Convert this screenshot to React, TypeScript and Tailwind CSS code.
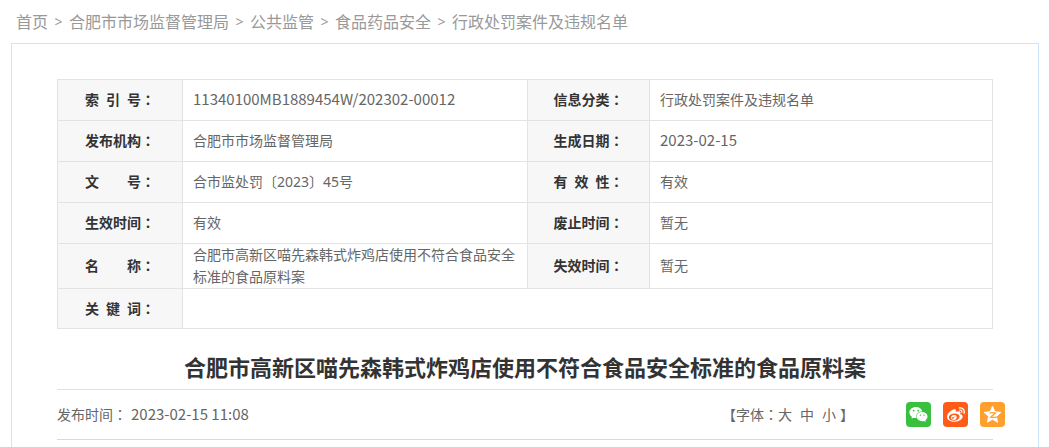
import { FaWeibo, FaWeixin } from "react-icons/fa";

const crumbs = ["首页", "合肥市市场监督管理局", "公共监管", "食品药品安全", "行政处罚案件及违规名单"];

type Field = { label: string; value: string; latin?: boolean };

const rows: [Field, Field][] = [
  [
    { label: "索\u2002引\u2002号", value: "11340100MB1889454W/202302-00012", latin: true },
    { label: "信息分类", value: "行政处罚案件及违规名单" },
  ],
  [
    { label: "发布机构", value: "合肥市市场监督管理局" },
    { label: "生成日期", value: "2023-02-15", latin: true },
  ],
  [
    { label: "文\u3000\u3000号", value: "合市监处罚〔2023〕45号" },
    { label: "有\u2002效\u2002性", value: "有效" },
  ],
  [
    { label: "生效时间", value: "有效" },
    { label: "废止时间", value: "暂无" },
  ],
  [
    { label: "名\u3000\u3000称", value: "合肥市高新区喵先森韩式炸鸡店使用不符合食品安全标准的食品原料案" },
    { label: "失效时间", value: "暂无" },
  ],
];

function Colon() {
  return <span className="font-['Noto_Sans_CJK_TC',sans-serif] leading-none">：</span>;
}

function Label({ children }: { children: string }) {
  return (
    <th scope="row" className="border border-[#e3e3e3] bg-[#f7f7f7] p-0 text-center font-bold text-[#333]">
      {children}
      <Colon />
    </th>
  );
}

function Value({ field }: { field: Field }) {
  return (
    <td className="border border-[#e3e3e3] px-2.5 py-0">
      {field.latin ? (
        <span className="font-['Noto_Sans_CJK_SC',sans-serif] text-[15px] leading-none">{field.value}</span>
      ) : (
        field.value
      )}
    </td>
  );
}

function QzoneIcon() {
  return (
    <svg viewBox="0 0 20 20" className="size-[19px]" aria-hidden="true">
      <path
        d="M10 1.2 12.6 7l6.3.7-4.7 4.3 1.3 6.3L10 15.1l-5.5 3.2L5.8 12 1.1 7.7 7.4 7Z"
        fill="#fff"
        stroke="#fff"
        strokeWidth="0.8"
        strokeLinejoin="round"
      />
      <path d="M6.8 8.5c2.2-.5 4.4-.5 6.4 0L8 12.8c2.2.5 4.4.4 6.6-.1" fill="none" stroke="#ff9f2e" strokeWidth="1.3" />
    </svg>
  );
}

export default function App() {
  return (
    <div className="bg-white font-['Noto_Sans','Noto_Sans_CJK_SC',sans-serif] text-sm leading-[22px] text-[#666]">
      <nav aria-label="面包屑" className="px-4 pt-2.5 pb-[9px] text-base leading-6 text-[#999]">
        <ol className="flex flex-wrap">
          {crumbs.map((name, i) => (
            <li key={name} className="flex">
              {i > 0 && <span className="w-[21px] text-center text-sm leading-6">&gt;</span>}
              <a href="#">{name}</a>
            </li>
          ))}
        </ol>
      </nav>

      <main className="mr-2.5 ml-[11px] border border-b-0 border-[#d0e4f7] px-[45px] pt-[35px] pb-2">
        <table className="w-full table-fixed border-collapse">
          <colgroup>
            <col className="w-[125px]" />
            <col className="w-[36.9%]" />
            <col className="w-[122px]" />
            <col />
          </colgroup>
          <tbody>
            {rows.map(([left, right]) => (
              <tr key={left.label} className="h-[41px]">
                <Label>{left.label}</Label>
                <Value field={left} />
                <Label>{right.label}</Label>
                <Value field={right} />
              </tr>
            ))}
            <tr className="h-10">
              <Label>{"关\u2002键\u2002词"}</Label>
              <td colSpan={3} className="border border-[#e3e3e3]" />
            </tr>
          </tbody>
        </table>

        <h1 className="border-b border-[#d0e4f7] pt-[21px] pb-[7px] text-center font-['Noto_Sans_CJK_SC',sans-serif] text-[22px] leading-8 font-bold text-[#333]">
          合肥市高新区喵先森韩式炸鸡店使用不符合食品安全标准的食品原料案
        </h1>

        <div className="flex h-[50px] items-center border-b border-[#d9d9d9]">
          <p>
            发布时间
            <Colon />
            <time
              dateTime="2023-02-15T11:08"
              className="ml-1 font-['Noto_Sans_CJK_SC',sans-serif] text-[15px] leading-none"
            >
              2023-02-15 11:08
            </time>
          </p>
          <div className="ml-auto flex gap-1">
            <div className="flex">
              <span>
                【字体
                <Colon />
              </span>
              <span className="flex gap-2">
                <button type="button">大</button>
                <button type="button">中</button>
                <button type="button">小</button>
              </span>
            </div>
            <span>】</span>
          </div>
          <div className="-mr-3 ml-[52px] flex gap-3 text-white">
            <a href="#" aria-label="微信" className="flex size-[25px] items-center justify-center rounded bg-[#38c03e]">
              <FaWeixin size={19} />
            </a>
            <a href="#" aria-label="微博" className="flex size-[25px] items-center justify-center rounded bg-[#ff5c1a]">
              <FaWeibo size={18} />
            </a>
            <a href="#" aria-label="QQ空间" className="flex size-[25px] items-center justify-center rounded bg-[#ff9f2e]">
              <QzoneIcon />
            </a>
          </div>
        </div>
      </main>
    </div>
  );
}
